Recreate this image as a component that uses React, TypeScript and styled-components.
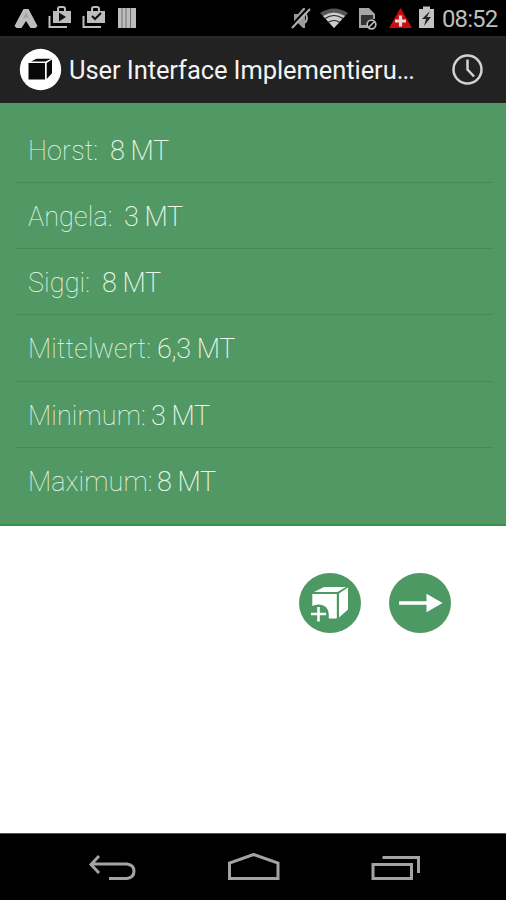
import React from 'react';
import styled, { createGlobalStyle } from 'styled-components';

const GlobalStyle = createGlobalStyle`
  body { margin: 0; background: #fff; font-family: Roboto, "Noto Sans", sans-serif; }
  svg { display: block; flex: none; }
`;

const Screen = styled.div`
  width: 506px;
  height: 900px;
  display: flex;
  flex-direction: column;
  overflow: hidden;
  background: #fff;
`;

const StatusBar = styled.header`
  height: 36px;
  flex: none;
  display: flex;
  justify-content: space-between;
  background: #000;
`;

const StatusGroup = styled.div`
  display: flex;
  align-items: center;
`;

const Clock = styled.span`
  width: 64px;
  font-size: 24px;
  line-height: 36px;
  letter-spacing: -0.9px;
  padding-top: 1px;
  color: #bdbdbd;
`;

const ActionBar = styled.div`
  height: 67px;
  box-sizing: border-box;
  flex: none;
  display: flex;
  align-items: center;
  padding: 0 22px 0 19px;
  background: #222;
  border-top: 2px solid #292929;
  border-bottom: 2px solid #1b2820;
`;

const Title = styled.h1`
  flex: 1;
  margin: 0 0 0 7px;
  font-size: 25.5px;
  font-weight: 400;
  line-height: 32px;
  letter-spacing: -0.08px;
  color: #f3f3f3;
  white-space: nowrap;
`;

const Ellipsis = styled.span`
  letter-spacing: -0.9px;
`;

const Results = styled.ul`
  list-style: none;
  margin: 0;
  height: 423px;
  box-sizing: border-box;
  flex: none;
  padding: 14px 13px 0 15px;
  background: #529865;
  border-bottom: 2px solid #35924f;
`;

const Row = styled.li`
  height: 66.15px;
  box-sizing: border-box;
  display: flex;
  align-items: center;
  padding: 3px 13px 0;
  font-size: 27px;
  line-height: 34px;
  color: #ecfaec;
  border-bottom: 1px solid #458b59;
  &:last-child { border-bottom-color: transparent; }
`;

const Label = styled.span<{ $width: number }>`
  width: ${(p) => p.$width}px;
  flex: none;
  font-weight: 100;
  letter-spacing: 0.1px;
  white-space: nowrap;
`;

const Value = styled.span`
  font-weight: 200;
  letter-spacing: -0.4px;
  white-space: nowrap;
`;

const Content = styled.main`
  flex: 1;
  display: flex;
  align-items: flex-start;
  justify-content: flex-end;
  gap: 28px;
  padding: 47px 55px 0 0;
`;

const RoundButton = styled.button`
  width: 62px;
  height: 60px;
  padding: 0;
  border: 0;
  border-radius: 50%;
  background: #4d9963;
`;

const NavBar = styled.nav`
  height: 67px;
  box-sizing: border-box;
  flex: none;
  display: flex;
  align-items: center;
  justify-content: space-between;
  padding: 2px 84px 0 87px;
  background: #000;
  border-top: 1px solid #555;
`;

const rows = [
  { label: 'Horst:', value: '8 MT', width: 82 },
  { label: 'Angela:', value: '3 MT', width: 96 },
  { label: 'Siggi:', value: '8 MT', width: 74 },
  { label: 'Mittelwert:', value: '6,3 MT', width: 129 },
  { label: 'Minimum:', value: '3 MT', width: 123 },
  { label: 'Maximum:', value: '8 MT', width: 129 },
];

const NotificationIcons = () => (
  <svg width="150" height="36" fill="#bdbdbd">
    <path d="M23.500 9h5l9 17-2 2h-5l-4.500-7-4.500 7h-5l-2-2z" />
    <path d="M23 19l3-7 3 7-3-2z" fill="#a0a0a0" />
    {[0, 34].map((x) => (
      <g key={x} transform={`translate(${x} 0)`}>
        <path d="M53 11h18v12H53z" />
        <path d="M58 11V9q0-2 2-2h3q2 0 2 2v2M49.500 16v11H67" fill="none" stroke="#bdbdbd" strokeWidth="2" />
        {x === 0 ? <path d="M59 12.500l7 4.500-7 4.500z" fill="#111" /> : <path d="M58 16l3 3 6-6" fill="none" stroke="#111" strokeWidth="2" />}
      </g>
    ))}
    <path d="M118 8h18v20h-18z" />
    <path d="M121.500 8h1v20h-1zm4 0h1v20h-1zm4.500 0h1v20h-1z" fill="#707070" />
  </svg>
);

const SystemIcons = () => (
  <svg width="152" height="36" viewBox="290 0 152 36">
    <path d="M294 14h4l5-6h2v20h-2l-5-5h-4z" fill="#999" />
    <path d="M305 13q4 5 0 10" fill="none" stroke="#aaa" strokeWidth="2" />
    <path d="M290 27l19-20" stroke="#000" strokeWidth="2" />
    <path d="M292 28l18-19" stroke="#b0b0b0" strokeWidth="2" />
    <path d="M320 13q14-9 28 0l-14 15z" fill="#555" />
    <path d="M323 16q11-7 22 0l-11 12z" fill="#ccc" />
    <path d="M325 18.500q9-6 18 0M328 22.500q6-4 12 0" fill="none" stroke="#222" strokeWidth="1.200" />
    <path d="M359 8h10l6 6v5h-2v-4h-12v10h7v3h-9z" fill="#a6a6a6" />
    <path d="M361 15h12v10h-12z" fill="#333" />
    <circle cx="371.500" cy="24.500" r="4.300" fill="#000" stroke="#bbb" strokeWidth="1.700" />
    <path d="M368.500 27.500l6-6" stroke="#bbb" strokeWidth="1.700" />
    <path d="M400.500 8L412 28H389z" fill="#c80d14" />
    <path d="M400.500 15.500v11M395 21h11" stroke="#e8dada" strokeWidth="3.200" />
    <path d="M419 9h4V6.500h7V9h4v19h-15z" fill="#c2c2c2" />
    <path d="M430 11l-8 8h4l-2 7 7-9h-4z" fill="#222" />
  </svg>
);

const AppIcon = () => (
  <svg width="43" height="43" viewBox="19 48 43 43">
    <circle cx="40.500" cy="69.500" r="20.700" fill="#fff" />
    <path d="M28.500 63h16.500v16.500H28.500zM31 61.500l5.500-2.800H51l-5.500 2.800zM46.700 63l5.300-3.500v13.800l-5.300 5.700z" fill="#080808" />
  </svg>
);

const HistoryIcon = () => (
  <svg width="32" height="32" fill="none" stroke="#d2d2d2">
    <circle cx="15.500" cy="15.500" r="14" strokeWidth="2.500" />
    <path d="M15.500 5.500v10l6.500 7" strokeWidth="2.500" />
  </svg>
);

const AddBoxIcon = () => (
  <svg width="62" height="60" viewBox="299 573 62 60">
    <path d="M312.300 594h24.500v24.500h-8q1-14-10.500-14-3 0-6 1.500zM314 592l10-5h22l-8.500 5zM339 593.500l9-6v22l-9 8z" fill="#fff" />
    <path d="M318.500 607v14.500M311 614h15" stroke="#fff" strokeWidth="2.600" />
  </svg>
);

const NextIcon = () => (
  <svg width="62" height="60" viewBox="389 573 62 60">
    <path d="M399 601.200h27.500v-7.500L442.500 603l-16 9.300v-7.500H399z" fill="#fff" />
  </svg>
);

const navLine = { fill: 'none', stroke: '#a3a3a3', strokeWidth: 3 };

const BackIcon = () => (
  <svg width="50" height="30" viewBox="88 854 50 30" {...navLine}>
    <path d="M100 857l-8 8.500 8 8.500M92 865h36q7 1 7 7.300 0 6.200-7 7.200h-18" />
  </svg>
);

const HomeIcon = () => (
  <svg width="54" height="30" viewBox="227 854 54 30" {...navLine}>
    <path d="M229.500 879.500v-15.500l24-8.500 24.500 8.500v15.500z" />
  </svg>
);

const RecentsIcon = () => (
  <svg width="52" height="30" viewBox="370 854 52 30" {...navLine}>
    <path d="M373 865.500h38.500v14H373zM382.500 858.500h36V874" />
  </svg>
);

export default function App() {
  return (
    <Screen>
      <GlobalStyle />
      <StatusBar>
        <StatusGroup><NotificationIcons /></StatusGroup>
        <StatusGroup><SystemIcons /><Clock>08:52</Clock></StatusGroup>
      </StatusBar>
      <ActionBar>
        <AppIcon />
        <Title>User Interface Implementieru<Ellipsis>...</Ellipsis></Title>
        <HistoryIcon />
      </ActionBar>
      <Results>
        {rows.map((r) => (
          <Row key={r.label}>
            <Label $width={r.width}>{r.label}</Label>
            <Value>{r.value}</Value>
          </Row>
        ))}
      </Results>
      <Content>
        <RoundButton aria-label="Add"><AddBoxIcon /></RoundButton>
        <RoundButton aria-label="Next"><NextIcon /></RoundButton>
      </Content>
      <NavBar>
        <BackIcon />
        <HomeIcon />
        <RecentsIcon />
      </NavBar>
    </Screen>
  );
}
